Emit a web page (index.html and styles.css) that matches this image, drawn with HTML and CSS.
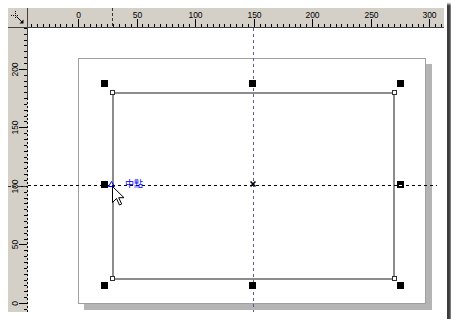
FILE: index.html
```html
<!DOCTYPE html>
<html lang="zh-Hant">
<head>
    <meta charset="UTF-8">
    <title>中點</title>
    <link rel="stylesheet" href="styles.css">
</head>
<body>
    <div class="shot">
        <div class="editor">
            <div class="corner">
                <svg width="19" height="19" viewBox="0 0 19 19">
                    <path d="M3 7.5h7M7.5 3v7" stroke="#000" stroke-dasharray="1 1"/>
                    <path d="M8.5 8.5l6 6" stroke="#000"/>
                    <path d="M15.5 15.5h-4l4-4z" fill="#000"/>
                </svg>
            </div>
            <div class="ruler ruler-top">
                <svg id="rulerTop" width="416" height="19"></svg>
            </div>
            <div class="ruler ruler-left">
                <svg id="rulerLeft" width="20" height="284"></svg>
            </div>
            <div class="canvas">
                <svg width="416" height="284" viewBox="0 0 416 284">
                    <!-- page and its shadow -->
                    <rect class="page-shadow" x="56" y="36" width="348" height="246"/>
                    <rect class="page" x="50.5" y="30.5" width="347" height="245"/>

                    <!-- selected rectangle -->
                    <rect class="shape" x="85" y="65" width="281" height="186"/>

                    <!-- guides -->
                    <line class="guide guide-h" x1="0" y1="157.5" x2="409" y2="157.5"/>
                    <line class="guide guide-v" x1="225.5" y1="0" x2="225.5" y2="284"/>

                    <!-- node corners -->
                    <rect class="node" x="82.5" y="62.5" width="4" height="4"/>
                    <rect class="node" x="364.5" y="62.5" width="4" height="4"/>
                    <rect class="node" x="82.5" y="248.5" width="4" height="4"/>
                    <rect class="node" x="364.5" y="248.5" width="4" height="4"/>

                    <!-- selection handles -->
                    <rect class="handle" x="73" y="52" width="7" height="7"/>
                    <rect class="handle" x="221" y="52" width="7" height="7"/>
                    <rect class="handle" x="369" y="52" width="7" height="7"/>
                    <rect class="handle" x="73" y="153" width="7" height="7"/>
                    <rect class="handle" x="369" y="153" width="7" height="7"/>
                    <line x1="371" y1="157.5" x2="374" y2="157.5" stroke="#fff"/>
                    <rect class="handle" x="73" y="254" width="7" height="7"/>
                    <rect class="handle" x="221" y="254" width="7" height="7"/>
                    <rect class="handle" x="369" y="254" width="7" height="7"/>

                    <!-- rotation centre -->
                    <path d="M222.5 153.5l5 5M227.5 153.5l-5 5" stroke="#000" stroke-width="1.6"/>

                    <!-- snap hint -->
                    <path d="M83.5 153.5l3 5h-6z" fill="none" stroke="#0000ff"/>
                    <text class="snap-label" x="97" y="159">中點</text>

                    <!-- mouse pointer -->
                    <path d="M84.5 158.5v16l4-4 3 6.5 2.2-1-3-6.3h5.3z" fill="#fff" stroke="#000"/>
                </svg>
            </div>
        </div>
    </div>

    <script src="ruler.js"></script>
</body>
</html>
```

FILE: styles.css
```css
* {
    margin: 0;
    padding: 0;
    box-sizing: border-box;
}

body {
    font-family: 'Liberation Sans', Arial, sans-serif;
    background: #ffffff;
}

svg {
    display: block;
}

.shot {
    width: 447px;
    height: 319px;
    padding: 8px 3px 7px 8px;
    background: #ffffff;
    box-shadow: 4px 4px 2px #3c3c3c;
}

.editor {
    display: grid;
    grid-template-columns: 20px 416px;
    grid-template-rows: 20px 284px;
}

.corner {
    background: #d4d0c8;
    border-right: 1px solid #404040;
    border-bottom: 1px solid #404040;
}

.ruler {
    background: #d4d0c8;
}

.ruler-top {
    border-bottom: 1px solid #404040;
}

.ruler text {
    font-family: 'Liberation Sans', Arial, sans-serif;
    font-size: 8.5px;
    fill: #000;
}

.canvas {
    background: #ffffff;
}

.page-shadow {
    fill: #b4b4b4;
}

.page {
    fill: #ffffff;
    stroke: #a0a0a0;
}

.shape {
    fill: none;
    stroke: #8c8c8c;
    stroke-width: 2;
}

.guide {
    stroke-width: 1;
    stroke-dasharray: 3 3;
}

.guide-h {
    stroke: #000000;
}

.guide-v {
    stroke: #5a5a9a;
}

.node {
    fill: #ffffff;
    stroke: #303030;
}

.handle {
    fill: #000000;
}

.snap-label {
    font-family: 'Noto Sans CJK TC', 'Noto Sans CJK SC', sans-serif;
    font-size: 9px;
    fill: #0000ff;
}
```

FILE: ruler.js
```js
const SCALE = 1.171;
const NS = 'http://www.w3.org/2000/svg';

function add(svg, tag, attrs, text) {
    const el = document.createElementNS(NS, tag);
    for (const k in attrs) el.setAttribute(k, attrs[k]);
    if (text !== undefined) el.textContent = text;
    svg.appendChild(el);
    return el;
}

// horizontal ruler, 0 sits at x=50 in local coords
function buildTop() {
    const svg = document.getElementById('rulerTop');
    for (let u = -45; u <= 320; u += 5) {
        const x = Math.round(50 + u * SCALE) + 0.5;
        if (x < 0 || x > 416) continue;
        const major = u % 50 === 0;
        add(svg, 'line', { x1: x, y1: major ? 11 : 16, x2: x, y2: 19, stroke: '#000' });
        if (major) add(svg, 'text', { x: x, y: 10, 'text-anchor': 'middle' }, u);
    }
    // mouse position marker
    add(svg, 'line', { x1: 84.5, y1: 0, x2: 84.5, y2: 19, stroke: '#333', 'stroke-dasharray': '3 2' });
}

// vertical ruler, 0 sits at y=275 in local coords
function buildLeft() {
    const svg = document.getElementById('rulerLeft');
    for (let v = -5; v <= 250; v += 5) {
        const y = Math.round(275 - v * SCALE) + 0.5;
        if (y < 0 || y > 284) continue;
        const major = v % 50 === 0;
        add(svg, 'line', { x1: major ? 11 : 16, y1: y, x2: 19, y2: y, stroke: '#000' });
        if (major) {
            add(svg, 'text', {
                x: 0, y: 0, 'text-anchor': 'middle',
                transform: 'translate(10 ' + y + ') rotate(-90)'
            }, v);
        }
    }
    add(svg, 'line', { x1: 0, y1: 158.5, x2: 19, y2: 158.5, stroke: '#333', 'stroke-dasharray': '3 2' });
    // edge line: solid at the top, dashed below
    add(svg, 'line', { x1: 19.5, y1: 0, x2: 19.5, y2: 70, stroke: '#404040' });
    add(svg, 'line', { x1: 19.5, y1: 70, x2: 19.5, y2: 284, stroke: '#000', 'stroke-dasharray': '2 2' });
}

buildTop();
buildLeft();
```
